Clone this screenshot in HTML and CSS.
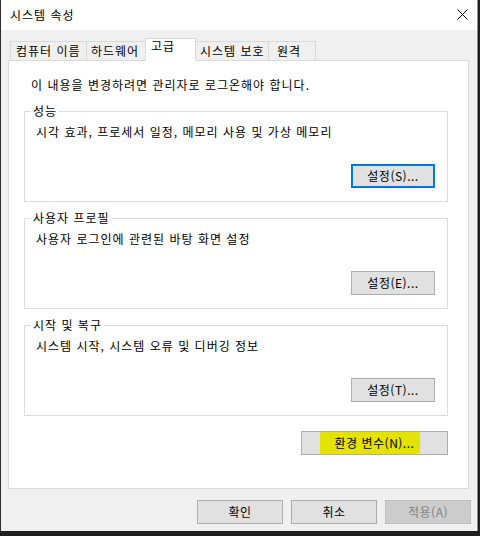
FILE: index.html
```html
<!DOCTYPE html>
<html lang="ko">
  <head>
    <meta charset="UTF-8" />
    <meta name="viewport" content="width=device-width, initial-scale=1.0" />
    <title>시스템 속성</title>
    <link rel="stylesheet" href="styles.css">
  </head>
  <body>
    <div class="window">
      <div class="titlebar">
        <span class="title">시스템 속성</span>
        <svg class="close" width="11" height="11" viewBox="0 0 11 11">
          <path d="M0.5 0.5 L10.5 10.5 M10.5 0.5 L0.5 10.5" stroke="#000" stroke-width="1" fill="none" />
        </svg>
      </div>

      <div class="body">
        <div class="tabs">
          <div class="tab tab-name">컴퓨터 이름</div>
          <div class="tab tab-hw">하드웨어</div>
          <div class="tab tab-adv active">고급</div>
          <div class="tab tab-prot">시스템 보호</div>
          <div class="tab tab-remote">원격</div>
        </div>

        <div class="panel">
          <p class="intro">이 내용을 변경하려면 관리자로 로그온해야 합니다.</p>

          <fieldset class="group">
            <legend>성능</legend>
            <p class="group-desc">시각 효과, 프로세서 일정, 메모리 사용 및 가상 메모리</p>
            <div class="group-actions">
              <button class="btn btn-focus">설정(S)...</button>
            </div>
          </fieldset>

          <fieldset class="group">
            <legend>사용자 프로필</legend>
            <p class="group-desc">사용자 로그인에 관련된 바탕 화면 설정</p>
            <div class="group-actions">
              <button class="btn">설정(E)...</button>
            </div>
          </fieldset>

          <fieldset class="group">
            <legend>시작 및 복구</legend>
            <p class="group-desc">시스템 시작, 시스템 오류 및 디버깅 정보</p>
            <div class="group-actions">
              <button class="btn">설정(T)...</button>
            </div>
          </fieldset>

          <div class="env-row">
            <button class="btn btn-env"><span class="marker">환경 변수(N)...</span></button>
          </div>
        </div>

        <div class="footer">
          <button class="btn btn-dialog">확인</button>
          <button class="btn btn-dialog">취소</button>
          <button class="btn btn-dialog" disabled>적용(A)</button>
        </div>
      </div>
    </div>
  </body>
</html>
```

FILE: styles.css
```css
body {
  margin: 0;
  padding: 0;
  background: #1f1f1f;
  font-family: "Noto Sans CJK KR", "Noto Sans", sans-serif;
  font-size: 12px;
  letter-spacing: 1px;
  color: #000;
  overflow: hidden;
}

/* Dialog frame */
.window {
  width: 476px;
  height: 531px;
  background: #f0f0f0;
  border-left: 1px solid #2d2d2d;
  border-right: 1px solid #8c8c8c;
}

.titlebar {
  height: 30px;
  background: #fff;
  display: flex;
  align-items: center;
  justify-content: space-between;
  padding: 0 9px 1px 9px;
  box-sizing: border-box;
}

.title {
  line-height: 16px;
}

.close {
  display: block;
}

.body {
  padding: 8px 8px 0 7px;
}

/* Tab strip */
.tabs {
  display: flex;
  height: 22px;
  margin-left: 2px;
  position: relative;
  z-index: 1;
}

.tab {
  box-sizing: border-box;
  height: 19px;
  margin-top: 3px;
  margin-right: -1px;
  border: 1px solid #d9d9d9;
  border-bottom: none;
  background: #f0f0f0;
  line-height: 18px;
  white-space: nowrap;
}

.tab-name { width: 77px; padding-left: 5px; }
.tab-hw { width: 60px; padding-left: 4px; }
.tab-adv { width: 51px; padding-left: 5px; }
.tab-prot { width: 74px; padding-left: 4px; }
.tab-remote { width: 48px; padding-left: 8px; }

.tab.active {
  height: 23px;
  margin-top: 0;
  background: #fff;
  line-height: 13px;
}

/* Tab page */
.panel {
  box-sizing: border-box;
  width: 461px;
  height: 429px;
  background: #fff;
  border: 1px solid #d9d9d9;
  padding: 16px 20px 0 15px;
}

.intro {
  margin: 0 0 10px 7px;
  line-height: 16px;
}

.group {
  margin: 0 0 8px 0;
  padding: 5px 12px 13px 6px;
  border: 1px solid #dcdcdc;
  min-width: 0;
}

.group legend {
  padding: 0 2px;
  line-height: 16px;
}

.group-desc {
  margin: 0 0 0 5px;
  line-height: 16px;
}

.group-actions {
  display: flex;
  justify-content: flex-end;
  margin-top: 24px;
}

.env-row {
  display: flex;
  justify-content: flex-end;
  margin-top: 15px;
}

/* Buttons */
.btn {
  box-sizing: border-box;
  width: 84px;
  height: 24px;
  padding: 0;
  background: #e1e1e1;
  border: 1px solid #adadad;
  border-radius: 0;
  font-family: inherit;
  font-size: 12px;
  letter-spacing: 0.5px;
  line-height: 16px;
  color: #000;
}

.btn-focus {
  border: 2px solid #0078d7;
}

.btn-env {
  width: 147px;
  position: relative;
  z-index: 0;
}

/* Yellow marker stroke over the env button label */
.marker {
  position: relative;
}

.marker::before {
  content: "";
  position: absolute;
  left: -15px;
  right: -6px;
  top: -2px;
  bottom: -3px;
  background: #e3e200;
  border-radius: 2px;
  z-index: -1;
}

.footer {
  display: flex;
  justify-content: flex-end;
  gap: 8px;
  margin-top: 11px;
  margin-right: -8px;
  padding-right: 6px;
}

.btn-dialog {
  width: 86px;
}

.btn:disabled {
  background: #cccccc;
  border-color: #bfbfbf;
  color: #838383;
}
```
